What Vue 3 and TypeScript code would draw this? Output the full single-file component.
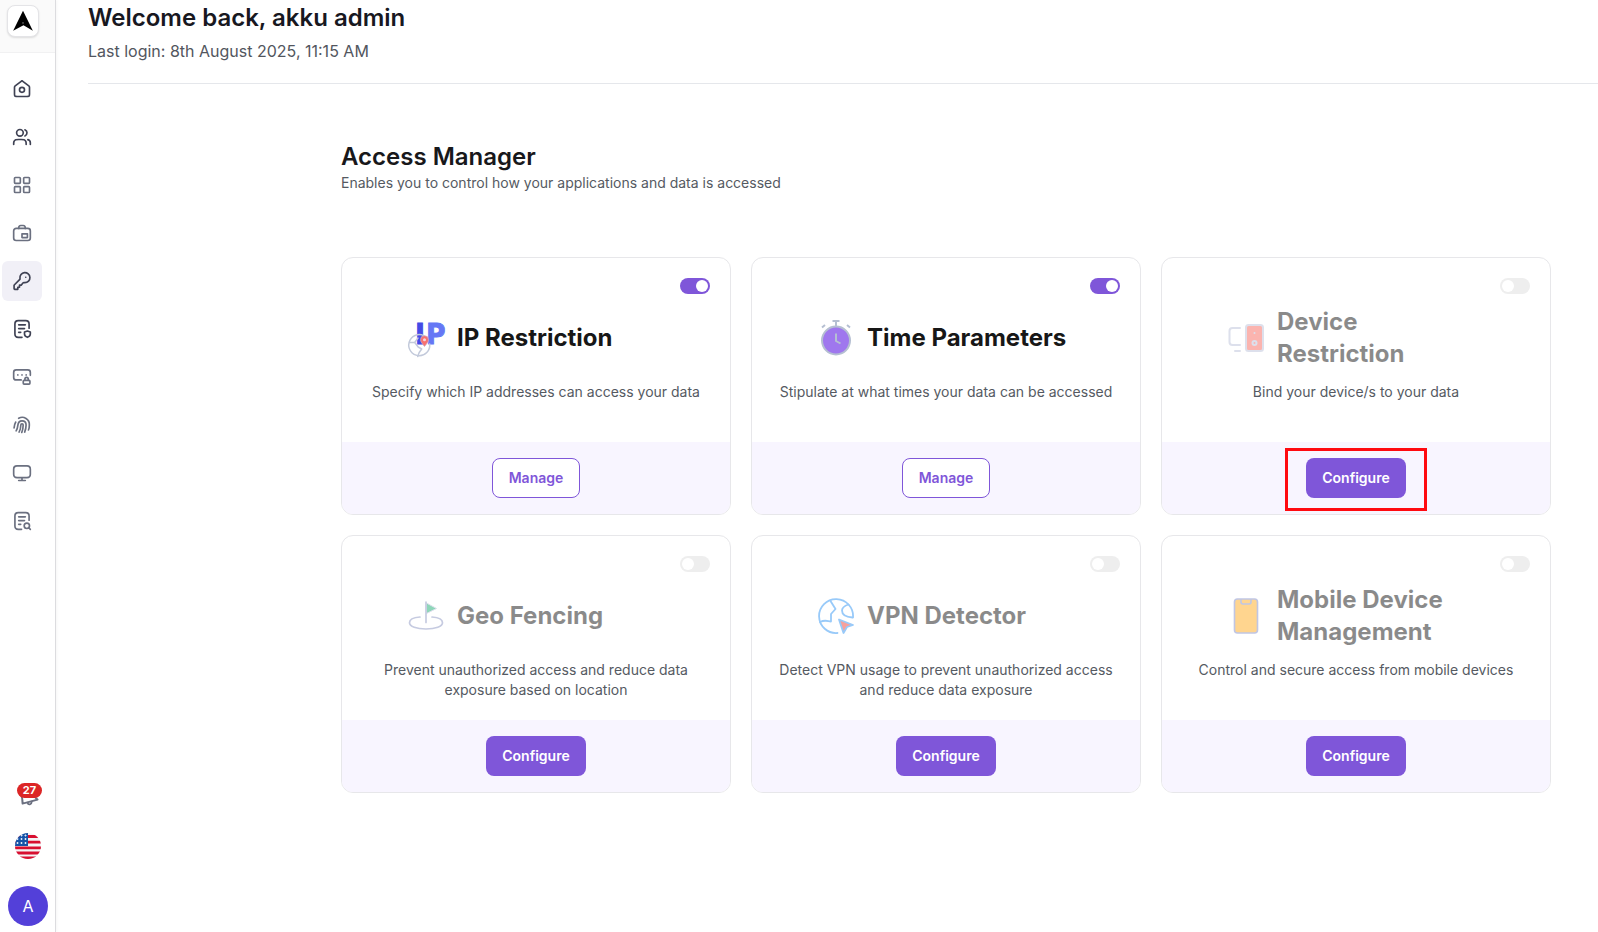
<script setup lang="ts">
import { ref } from 'vue'

interface NavItem {
  label: string
  paths: string[]
  strong?: boolean
  active?: boolean
}

interface Feature {
  id: string
  title: string
  text: string
  enabled: boolean
  highlighted?: boolean
}

const navItems: NavItem[] = [
  {
    label: 'Home',
    strong: true,
    paths: [
      'M3 10.565c0-.574 0-.861.074-1.126a2 2 0 0 1 .318-.65c.163-.22.39-.397.843-.75l6.783-5.275c.351-.273.527-.41.72-.462a1 1 0 0 1 .524 0c.194.053.37.19.72.462l6.783 5.275c.453.353.68.53.843.75.145.195.252.416.318.65.074.265.074.552.074 1.126V17.8c0 1.12 0 1.68-.218 2.108a2 2 0 0 1-.874.874C19.48 21 18.92 21 17.8 21H6.2c-1.12 0-1.68 0-2.108-.218a2 2 0 0 1-.874-.874C3 19.48 3 18.92 3 17.8z',
      'M15 13a3 3 0 1 1-6 0 3 3 0 0 1 6 0z',
    ],
  },
  {
    label: 'Users',
    strong: true,
    paths: [
      'M22 21v-2a4 4 0 0 0-3-3.873M15.5 3.291a4 4 0 0 1 0 7.418M17 21c0-1.864 0-2.796-.305-3.53a4 4 0 0 0-2.164-2.165C13.796 15 12.864 15 11 15H8c-1.864 0-2.796 0-3.53.305a4 4 0 0 0-2.166 2.164C2 18.204 2 19.136 2 21M13.5 7a4 4 0 1 1-8 0 4 4 0 0 1 8 0z',
    ],
  },
  {
    label: 'Applications',
    paths: [
      'M4 3h5a1 1 0 0 1 1 1v5a1 1 0 0 1-1 1H4a1 1 0 0 1-1-1V4a1 1 0 0 1 1-1z',
      'M15 3h5a1 1 0 0 1 1 1v5a1 1 0 0 1-1 1h-5a1 1 0 0 1-1-1V4a1 1 0 0 1 1-1z',
      'M4 14h5a1 1 0 0 1 1 1v5a1 1 0 0 1-1 1H4a1 1 0 0 1-1-1v-5a1 1 0 0 1 1-1z',
      'M15 14h5a1 1 0 0 1 1 1v5a1 1 0 0 1-1 1h-5a1 1 0 0 1-1-1v-5a1 1 0 0 1 1-1z',
    ],
  },
  {
    label: 'Provisioning',
    paths: [
      'M5 6.500h14a3 3 0 0 1 3 3V18a3 3 0 0 1-3 3H5a3 3 0 0 1-3-3V9.500a3 3 0 0 1 3-3z',
      'M8 6.500C8 4 9 3 10.500 3h3C15 3 16 4 16 6.500',
      'M12 13h6.500v4.500H12z',
    ],
  },
  {
    label: 'Access manager',
    strong: true,
    active: true,
    paths: [
      'M16.500 7.500h.01M15.500 14a6 6 0 1 0-5.946-5.193c.058.434.087.651.068.789a.853.853 0 0 1-.117.346c-.068.121-.187.24-.426.479l-6.110 6.110c-.173.173-.26.26-.322.36a1 1 0 0 0-.12.29C2.500 17.296 2.500 17.418 2.500 17.663V20.400c0 .56 0 .84.109 1.054a1 1 0 0 0 .437.437C3.260 22 3.540 22 4.100 22H7v-2.500h2V17h2l2.080-2.580c.238-.238.357-.357.478-.425a.852.852 0 0 1 .346-.117c.138-.02.355.01.789.068.264.035.533.054.807.054z',
    ],
  },
  {
    label: 'Policies',
    strong: true,
    paths: [
      'M12 22H7.500C4.500 22 3.500 21 3.500 18V6c0-3 1-4 4-4h9c3 0 4 1 4 4v5',
      'M8 7h8M8 11.500h7M8 16h2.500',
      'M18.500 14.500l3.500 1.200v2.300c0 2-1.500 3.200-3.500 4-2-.8-3.500-2-3.500-4v-2.300z',
    ],
  },
  {
    label: 'Password policy',
    paths: [
      'M11 15.500H5c-2 0-3-1-3-3V6.500c0-2 1-3 3-3h14c2 0 3 1 3 3V10',
      'M7 9.500h.01M12 9.500h.01M17 9.500h.01',
      'M14.500 16h6a1 1 0 0 1 1 1v2.500a1 1 0 0 1-1 1h-6a1 1 0 0 1-1-1V17a1 1 0 0 1 1-1z',
      'M15.500 16v-1.500a2 2 0 0 1 4 0V16',
    ],
  },
  {
    label: 'Authentication',
    paths: [
      'M4.500 8.500C3.500 10 3 12 2.500 15.500',
      'M8 4a8.500 8.500 0 0 1 12.800 8c0 3-.5 5-1 6',
      'M5 19c1.500-2 1.800-4.500 2-6.500C7.300 9.300 9.500 7 12 7c3 0 4.900 2.200 4.900 5 0 3-.7 6-1.700 8.500',
      'M8.500 20.500c1.500-2.500 2-5 2.100-8.500 0-1 .6-1.500 1.400-1.500s1.400.5 1.400 1.500c0 3.500-.7 6.500-1.700 9',
    ],
  },
  {
    label: 'Devices',
    paths: [
      'M8 21h8M12 17.500V21M6 3.500h12c3 0 4 1 4 4v6c0 3-1 4-4 4H6c-3 0-4-1-4-4v-6c0-3 1-4 4-4z',
    ],
  },
  {
    label: 'Audit reports',
    paths: [
      'M11.500 22H7.500C4.500 22 3.500 21 3.500 18V6c0-3 1-4 4-4h9c3 0 4 1 4 4v5',
      'M8 7h8M8 11.500h7M8 16h2.500',
      'M22 22l-1.600-1.600M21 17.800a3.200 3.200 0 1 1-6.400 0 3.200 3.200 0 0 1 6.400 0z',
    ],
  },
]

const features = ref<Feature[]>([
  { id: 'ip', title: 'IP Restriction', text: 'Specify which IP addresses can access your data', enabled: true },
  { id: 'time', title: 'Time Parameters', text: 'Stipulate at what times your data can be accessed', enabled: true },
  { id: 'device', title: 'Device Restriction', text: 'Bind your device/s to your data', enabled: false, highlighted: true },
  { id: 'geo', title: 'Geo Fencing', text: 'Prevent unauthorized access and reduce data exposure based on location', enabled: false },
  { id: 'vpn', title: 'VPN Detector', text: 'Detect VPN usage to prevent unauthorized access and reduce data exposure', enabled: false },
  { id: 'mobile', title: 'Mobile Device Management', text: 'Control and secure access from mobile devices', enabled: false },
])
</script>

<template>
  <div class="layout">
    <aside class="sidebar">
      <div class="brand">
        <a class="logo" href="#" aria-label="Akku">
          <svg viewBox="0 0 32 32" aria-hidden="true">
            <path d="M16 5 26.500 26.500 16.500 20.500 5.500 26.500z" fill="#000" />
            <circle cx="16" cy="18" r="1" fill="#555" />
          </svg>
        </a>
      </div>
      <nav class="nav" aria-label="Main">
        <a
          v-for="item in navItems"
          :key="item.label"
          href="#"
          class="nav-link"
          :class="{ strong: item.strong, active: item.active }"
          :aria-label="item.label"
        >
          <svg viewBox="0 0 24 24" aria-hidden="true">
            <path v-for="d in item.paths" :key="d" :d="d" />
          </svg>
        </a>
      </nav>
      <div class="tools">
        <button class="bell" type="button" aria-label="Notifications">
          <svg viewBox="0 0 24 24" aria-hidden="true">
            <path d="M3.500 10c2 3.500 3 6.500 2.500 11.500L22.500 17C19 14.500 18 12 17.500 8" />
            <path d="M11.500 20.500c.8 2.800 4.500 2.200 4.500-1.200" />
          </svg>
          <span class="badge">27</span>
        </button>
        <button class="flag" type="button" aria-label="Language">
          <svg viewBox="0 0 26 26" aria-hidden="true">
            <defs>
              <clipPath id="flag-round"><circle cx="13" cy="13" r="13" /></clipPath>
            </defs>
            <g clip-path="url(#flag-round)">
              <rect width="26" height="26" fill="#f4f4f6" />
              <path d="M0 3.500h26M0 9.200h26M0 14.900h26M0 20h26M0 25h26" stroke="#d80f30" stroke-width="2.800" />
              <rect width="13" height="13" fill="#1553a8" />
              <path
                d="M6.500 1.500v2M10.500 1.500v2M2.500 5v2M6.500 5v2M10.500 5v2M2.500 9v2M6.500 9v2M10.500 9v2M5.500 2.500h2M9.500 2.500h2M1.500 6h2M5.500 6h2M9.500 6h2M1.500 10h2M5.500 10h2M9.500 10h2"
                stroke="#dce8f7"
                stroke-width="1"
              />
            </g>
          </svg>
        </button>
        <button class="avatar" type="button" aria-label="Account">A</button>
      </div>
    </aside>

    <main class="main">
      <header class="welcome">
        <h1>Welcome back, akku admin</h1>
        <p>Last login: 8th August 2025, 11:15 AM</p>
      </header>

      <section class="content">
        <h2>Access Manager</h2>
        <p class="lead">Enables you to control how your applications and data is accessed</p>

        <div class="cards">
          <article v-for="f in features" :key="f.id" class="card" :class="{ off: !f.enabled }">
            <div class="card-body">
              <input v-model="f.enabled" class="switch" type="checkbox" role="switch" :aria-label="f.title" />
              <div class="card-head">
                <svg v-if="f.id === 'ip'" class="icon" viewBox="0 0 40 40" aria-hidden="true">
                  <g font-family="Inter, sans-serif" font-size="28" font-weight="800" stroke-width="1">
                    <text x="10" y="26" fill="#434be6" stroke="#434be6">I</text>
                    <text x="21" y="26" fill="#6577f5" stroke="#6577f5">P</text>
                  </g>
                  <g fill="none" stroke="#c3cadb" stroke-width="1.500" stroke-linecap="round" stroke-linejoin="round">
                    <path d="M18 17.800A10.500 10.500 0 1 0 23.700 26" />
                    <path d="M3.700 24.500h5l3.500 4.500 3.500 2-2.500 3.500-1.500 4M9 24l3-4" />
                  </g>
                  <path d="M18.500 28.500c-2-2.500-4-4.500-4-6.800a4 4 0 0 1 8 0c0 2.300-2 4.300-4 6.800z" fill="#f87171" stroke="#c3b2cc" stroke-width=".7" />
                  <circle cx="18.500" cy="21.800" r="1.500" fill="#f6d6dc" />
                </svg>
                <svg v-else-if="f.id === 'time'" class="icon" viewBox="0 0 40 40" aria-hidden="true">
                  <circle cx="20" cy="22.500" r="14" fill="#9f77ee" stroke="#b5bfd2" stroke-width="2" />
                  <path d="M16.500 3h7M20 3v5M6 9.500 9 7M34 9.500 31 7M20 15.500V23l4.500 2.500" fill="none" stroke="#b5bfd2" stroke-width="2" stroke-linejoin="round" />
                </svg>
                <svg v-else-if="f.id === 'device'" class="icon" viewBox="0 0 40 40" aria-hidden="true">
                  <g stroke="#bcc3da" stroke-width="2" stroke-linecap="round" stroke-linejoin="round">
                    <path d="M14 10H6.500A3 3 0 0 0 3.500 13v11a3 3 0 0 0 3 3H14M9 33h5" fill="none" />
                    <rect x="20" y="7" width="17" height="26" rx="2.500" fill="#f96c62" />
                    <circle cx="28.500" cy="25" r="2" fill="#f96c62" />
                    <path d="M28.500 15v.01" />
                  </g>
                </svg>
                <svg v-else-if="f.id === 'geo'" class="icon" viewBox="0 0 40 40" aria-hidden="true">
                  <path d="M20.500 7 30.500 12.500 20.500 17.500z" fill="#1fae75" stroke="#bcc3da" stroke-width="1" />
                  <path d="M20 6v20.500M14 21C7 21.500 3.500 24 3.500 26.800c0 3.700 7 6.200 16.500 6.200s16.500-2.500 16.500-6.200C36.500 24 33 21.500 26 21" fill="none" stroke="#8f99c4" stroke-width="1.700" stroke-linecap="round" />
                </svg>
                <svg v-else-if="f.id === 'vpn'" class="icon" viewBox="0 0 40 40" aria-hidden="true">
                  <g fill="none" stroke="#3496f5" stroke-width="1.800" stroke-linejoin="round" stroke-linecap="round">
                    <path d="M21.500 37A17 17 0 1 1 37 21.500" />
                    <path d="M4 26c5-2.500 7-1 11-.5V18l4.500-5-5-8M32.500 8.500C28 10 26 12 26 14.500c0 4 4 6.500 10.500 7" />
                    <path d="M23 23.500 37 29l-6 2-3.500 6z" fill="#f0443b" />
                  </g>
                </svg>
                <svg v-else class="icon" viewBox="0 0 40 40" aria-hidden="true">
                  <g stroke="#828ecb" stroke-width="1.600" stroke-linejoin="round">
                    <rect x="8.500" y="3" width="23" height="34" rx="3" fill="#ffad22" />
                    <path d="M15 3v3a2 2 0 0 0 2 2h6a2 2 0 0 0 2-2V3" fill="none" />
                  </g>
                </svg>
                <h3>{{ f.title }}</h3>
              </div>
              <p class="card-text">{{ f.text }}</p>
            </div>
            <footer class="card-foot">
              <div class="action" :class="{ highlighted: f.highlighted }">
                <button class="btn" :class="f.enabled ? 'outline' : 'solid'" type="button">
                  {{ f.enabled ? 'Manage' : 'Configure' }}
                </button>
              </div>
            </footer>
          </article>
        </div>
      </section>
    </main>
  </div>
</template>

<style>
body {
  margin: 0;
  background: #fff;
}
</style>

<style scoped>
* {
  box-sizing: border-box;
}

.layout {
  display: flex;
  min-height: 100vh;
  font-family: Inter, sans-serif;
  color: #18181b;
}

h1,
h2,
h3,
p {
  margin: 0;
}

button {
  font-family: inherit;
  padding: 0;
  border: 0;
  background: none;
}

svg {
  display: block;
}

.sidebar {
  display: flex;
  flex: none;
  flex-direction: column;
  width: 56px;
  border-right: 1px solid #dcdcdf;
  background: #fff;
  box-shadow: 1px 0 3px rgba(0, 0, 0, 0.04);
}

.brand {
  padding: 5px 7px 15px;
  border-bottom: 1px solid #f1f1f2;
  background: #fafafa;
}

.logo {
  display: block;
  width: 32px;
  border: 1px solid #e4e4e7;
  border-radius: 8px;
  background: #fff;
  box-shadow: 0 1px 2px rgba(0, 0, 0, 0.12);
}

.nav {
  display: flex;
  flex-direction: column;
  gap: 8px;
  padding: 16px 2px;
}

.nav-link {
  display: grid;
  place-items: center;
  width: 40px;
  height: 40px;
  border-radius: 6px;
  color: #6b7080;
}

.nav-link.strong {
  color: #3f4254;
}

.nav-link.active {
  background: #f1f0f7;
}

.nav-link svg,
.bell svg {
  width: 20px;
  height: 20px;
  fill: none;
  stroke: currentColor;
  stroke-width: 2;
  stroke-linecap: round;
  stroke-linejoin: round;
}

.bell svg {
  width: 22px;
  height: 22px;
}

.tools {
  display: flex;
  flex-direction: column;
  align-items: center;
  gap: 27px;
  margin-top: auto;
  padding: 0 0 6px 1px;
}

.bell {
  position: relative;
  color: #6b7080;
}

.badge {
  position: absolute;
  top: -1px;
  left: 0;
  width: 25px;
  border-radius: 8px;
  background: #dc2626;
  color: #fff;
  font-size: 11px;
  font-weight: 700;
  line-height: 15px;
  text-align: center;
}

.flag {
  width: 26px;
  height: 26px;
}

.avatar {
  width: 40px;
  height: 40px;
  border-radius: 50%;
  background: #5340d9;
  color: #fff;
  font-size: 16px;
}

.main {
  flex: 1;
  min-width: 0;
  padding-left: 32px;
}

.welcome {
  padding: 2px 0 20px;
  border-bottom: 1px solid #e5e7eb;
}

.welcome h1 {
  color: #18181f;
  font-size: 24px;
  font-weight: 600;
  line-height: 32px;
}

.welcome p {
  margin-top: 5px;
  color: #52565e;
  font-size: 16px;
  line-height: 24px;
}

.content {
  padding: 57px 47px 64px 253px;
}

.content h2 {
  font-size: 24px;
  font-weight: 600;
  line-height: 32px;
}

.lead {
  color: #555a62;
  font-size: 14px;
  line-height: 20px;
}

.cards {
  display: grid;
  grid-template-columns: repeat(3, minmax(0, 1fr));
  gap: 20px;
  margin-top: 64px;
}

.card {
  display: flex;
  flex-direction: column;
  overflow: hidden;
  border: 1px solid #e7e7ea;
  border-radius: 12px;
  background: #fff;
}

.card-body {
  display: flex;
  flex: 1;
  flex-direction: column;
  gap: 12px;
  padding: 20px;
}

.switch {
  display: block;
  align-self: flex-end;
  width: 30px;
  height: 16px;
  margin: 0;
  padding: 2px;
  border-radius: 8px;
  background: #eee;
  appearance: none;
}

.switch::before {
  display: block;
  width: 12px;
  height: 12px;
  border-radius: 50%;
  background: #fff;
  content: '';
}

.switch:checked {
  background: #7f56d9;
}

.switch:checked::before {
  margin-left: auto;
}

.card-head {
  display: flex;
  align-items: center;
  gap: 11px;
  min-height: 64px;
  padding: 0 44px;
}

.icon {
  flex: none;
  width: 40px;
  height: 40px;
}

.card-head h3 {
  color: #171717;
  font-size: 24px;
  font-weight: 700;
  line-height: 32px;
}

.off .card-head {
  opacity: 0.5;
}

.card-text {
  min-height: 40px;
  color: #555a62;
  font-size: 14px;
  line-height: 20px;
  text-align: center;
}

.card-foot {
  display: flex;
  justify-content: center;
  padding: 16px;
  background: #f8f5ff;
}

.action {
  position: relative;
}

.highlighted::after {
  position: absolute;
  inset: -10px -21px -13px;
  border: 3px solid #ff0a10;
  content: '';
  pointer-events: none;
}

.btn {
  display: block;
  height: 40px;
  padding: 0 16px 2px;
  border-radius: 8px;
  font-size: 14px;
  font-weight: 600;
}

.btn.outline {
  border: 1px solid #7f56d9;
  background: #fff;
  color: #7f56d9;
}

.btn.solid {
  background: #7f56d9;
  color: #fff;
}
</style>
